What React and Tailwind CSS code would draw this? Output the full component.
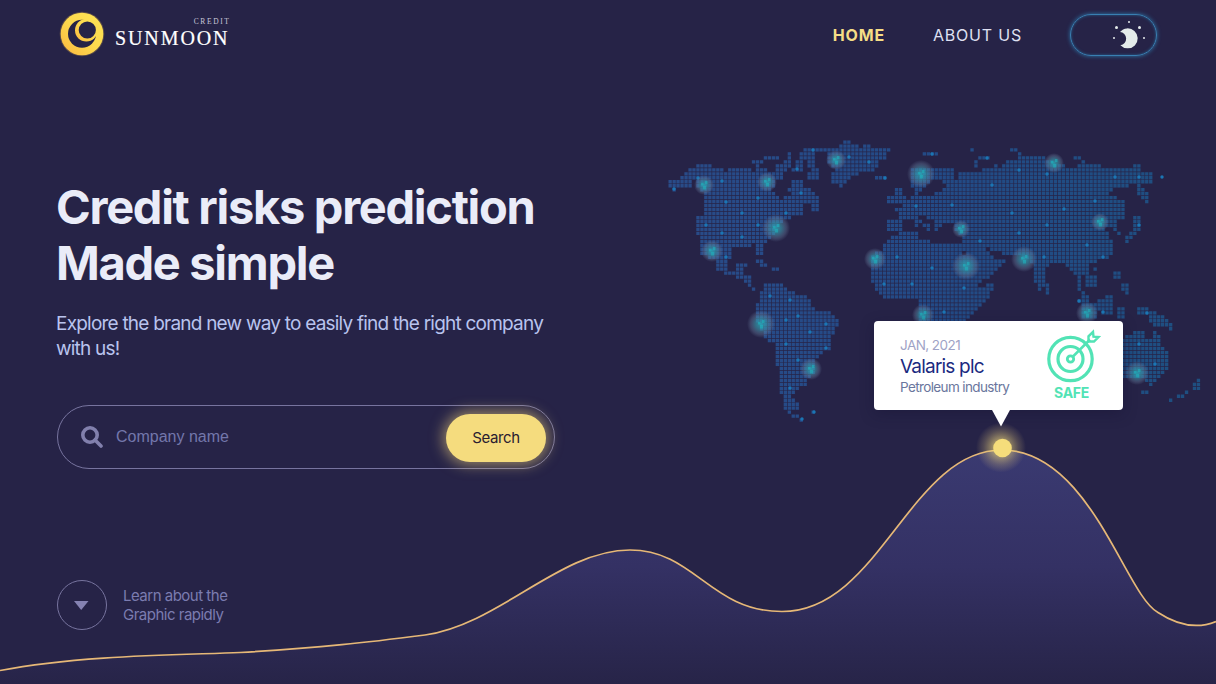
import React from "react";

// Outlines are kept at three units per pixel; each group has its own origin.
const LAND = [
  {
    origin: [660, 130],
    outlines: [
      "26,150 62,150 62,138 74,138 74,126 86,126 86,114 110,114 110,102 157,102 157,114 190,114 190,126 205,126 205,114 275,114 275,126 288,126 288,114 325,114 325,126 372,126 372,150 350,150 345,174 325,186 348,186 348,198 360,210 372,210 372,198 396,198 396,186 384,186 384,174 398,174 398,150 432,150 432,174 456,174 456,186 468,186 468,198 480,198 480,244 456,244 456,222 432,222 430,254 396,254 396,266 372,266 372,280 350,290 348,318 325,330 313,342 313,378 288,378 288,342 277,342 277,350 217,350 217,385 205,390 205,420 240,424 240,434 193,434 193,420 168,420 168,390 145,390 145,378 122,378 122,318 110,314 110,258 134,258 134,186 122,186 110,174 110,150 98,150 98,162 86,174 62,174 50,184 38,184 38,174 26,174",
      "277,90 313,90 313,102 277,102", "288,102 300,102 300,120 288,120", "313,78 360,78 360,90 313,90",
      "385,66 396,66 396,110 385,110", "372,90 384,90 384,130 372,130",
      "348,100 372,100 372,126 348,126",
      "408,90 432,90 432,128 396,128 396,112 408,108",
      "432,54 540,54 540,66 470,66 470,90 420,90 420,66 432,66",
      "444,90 468,90 468,114 480,126 480,150 444,150 444,126 456,114 444,112",
      "228,410 240,400 264,400 264,412 252,412 252,434 275,434 275,456 264,460 252,446 228,444",
      "288,388 310,388 310,398 288,398", "300,400 325,400 325,410 300,410", "337,412 360,412 360,424 337,424",
    ],
  },
  {
    origin: [820, 130],
    outlines: [
      "0,54 60,54 60,42 70,42 70,30 96,30 96,42 120,42 120,54 132,54 132,42 154,42 154,54 214,54 214,66 202,66 202,90 178,90 178,112 166,112 166,124 118,124 118,136 94,136 94,148 82,148 82,160 70,160 70,172 58,172 58,160 36,160 36,126 46,114 24,100 24,66 0,66",
      "166,138 202,138 202,150 166,150", "308,66 355,66 355,78 308,78", "446,54 468,54 468,66 446,66",
      "478,78 508,78 508,90 478,90", "462,90 474,90 474,114 462,114", "568,54 592,54 592,66 568,66", "592,66 604,66 604,78 592,78",
      "760,78 784,78 784,90 760,90", "782,90 796,90 796,102 782,102",
      "226,172 248,172 248,198 256,198 256,220 226,220", "202,198 224,198 224,222 202,222",
      "272,112 402,112 402,126 408,148 420,148 420,126 486,126 486,114 522,114 522,102 534,102 534,114 546,114 546,102 558,102 558,90 594,90 594,78 680,78 680,90 725,102 745,114 768,114 768,102 844,102 844,114 938,114 938,102 960,102 960,114 972,126 996,126 996,160 960,160 960,170 972,180 984,190 984,216 972,216 972,204 960,204 952,192 952,160 926,160 926,172 890,172 880,180 870,180 870,192 890,198 890,210 914,210 914,268 892,268 892,305 884,305 884,290 860,290 855,300 870,318 878,330 878,372 868,384 844,384 832,396 808,396 808,432 828,432 828,470 805,475 798,462 800,440 785,430 780,440 780,480 770,480 770,440 760,430 750,420 738,408 728,396 700,396 690,408 682,420 678,430 676,460 668,480 656,480 654,460 642,450 642,420 636,400 620,385 590,378 546,372 534,362 510,362 506,350 496,350 510,372 522,384 546,384 558,396 546,408 534,420 522,430 510,440 498,450 486,450 478,470 520,460 522,480 510,492 498,516 486,528 474,540 456,560 420,600 300,600 300,540 298,516 286,504 190,504 178,492 166,470 154,450 154,420 145,400 165,370 190,360 190,342 210,330 212,316 236,316 236,304 202,306 202,268 236,268 244,260 236,252 226,246 226,234 244,234 256,222 250,210 268,212 275,200 285,198 290,180 272,172 268,140",
      "938,256 960,256 960,300 950,320 930,326 924,338 912,338 912,318 930,314 938,300",
      "892,300 902,312 890,312", "880,424 900,424 900,444 880,444", "900,460 924,456 924,492 912,492 900,480",
      "820,408 830,408 830,420 820,420", "676,464 688,464 688,492 676,492", "772,506 785,506 785,518 772,518",
      "784,482 808,500 808,518 784,515", "780,525 830,525 830,570 780,570",
      "832,516 850,504 878,496 878,552 850,552 832,540", "888,535 912,535 912,570 892,570",
      "948,532 975,532 990,545 1010,545 1030,560 1055,584 1055,602 1035,592 1000,588 985,562 948,550",
    ],
    holes: [
      "248,270 275,264 300,262 310,258 320,268 345,272 360,290 372,280 398,280 402,300 426,320 426,336 360,340 300,330 290,306 248,306",
      "300,186 345,150 375,160 378,172 345,190 330,198 300,195", "424,362 440,362 440,378 424,378",
    ],
  },
  {
    // Italy, Sicily and the Aegean, set in the Mediterranean
    origin: [820, 130],
    outlines: [
      "285,262 298,262 298,274 310,274 310,286 296,286 285,274", "308,278 332,278 332,304 320,304 308,290",
      "284,286 296,286 296,298 284,298", "344,278 356,278 356,304 344,304",
    ],
  },
  {
    origin: [860, 300],
    outlines: [
      "780,115 805,105 830,93 852,93 852,110 870,126 876,118 876,95 888,92 900,105 900,130 924,160 924,210 905,225 888,245 870,258 858,250 850,235 820,240 780,230",
      "842,270 864,270 864,284 842,284", "996,250 1008,250 1008,238 1020,238 1020,276 996,276",
      "970,274 982,274 982,286 970,286", "946,288 970,288 970,298 946,298", "932,298 944,298 944,310 932,310",
    ],
  },
  {
    origin: [720, 270],
    outlines: [
      "133,40 192,40 192,52 216,64 228,76 264,76 264,88 276,100 276,112 288,124 335,124 335,136 346,136 346,148 358,148 358,170 346,172 346,190 334,200 334,234 322,240 310,250 288,264 288,290 280,320 262,330 262,345 240,350 228,362 228,374 216,380 228,396 236,400 236,416 216,424 216,432 192,420 192,372 180,366 180,298 168,294 168,216 145,214 133,200 120,180 110,150 108,100 120,90 120,66 133,64",
      "216,430 238,430 238,442 216,442", "240,442 252,442 252,454 240,454", "276,418 288,418 288,430 276,430",
      "60,16 96,16 96,46 84,46 72,40 60,28", "94,50 108,50 108,64 94,64",
    ],
  },
];

const HUBS = [
  [704, 185, 10], [767, 182, 10], [776, 228, 14], [712, 251, 11], [836, 160, 10], [921, 174, 14],
  [961, 229, 9], [875, 259, 11], [966, 266, 14], [1054, 163, 10], [1100, 222, 9], [1024, 259, 13],
  [1087, 313, 11], [923, 315, 11], [761, 324, 14], [811, 369, 11], [1137, 373, 12],
];

const SPARKS = [
  [674, 189], [698, 178], [722, 181], [726, 202], [758, 198], [742, 213], [706, 225], [722, 233], [742, 237],
  [758, 225], [726, 257], [786, 213], [801, 193], [797, 169], [813, 150], [849, 157], [869, 162], [885, 178],
  [932, 154], [987, 158], [992, 185], [916, 206], [952, 205], [1012, 213], [980, 241], [897, 257], [932, 268],
  [884, 284], [912, 284], [964, 288], [944, 312], [1019, 170], [1047, 174], [1115, 177], [1139, 177], [1162, 177],
  [1095, 201], [1064, 209], [1047, 225], [1139, 225], [1087, 245], [1103, 257], [1044, 257], [1019, 233],
  [1079, 301], [1103, 312], [1147, 313], [1139, 344], [1155, 364], [770, 296], [790, 300], [798, 316], [786, 320],
  [810, 332], [826, 324], [786, 344], [826, 348], [798, 360], [790, 388], [814, 412], [802, 419],
];

const PITCH = 3.972;
const toPoints = (s) => s.split(" ").map((p) => p.split(",").map(Number));

function inside(pts, x, y) {
  let hit = false;
  for (let i = 0, j = pts.length - 1; i < pts.length; j = i++) {
    const [xi, yi] = pts[i];
    const [xj, yj] = pts[j];
    if (yi > y !== yj > y && x < ((xj - xi) * (y - yi)) / (yj - yi) + xi) hit = !hit;
  }
  return hit;
}

function buildCells() {
  const groups = LAND.map((g) => ({
    origin: g.origin,
    outlines: g.outlines.map(toPoints),
    holes: (g.holes || []).map(toPoints),
  }));
  let d = "";
  for (let r = 0; r < 72; r++) {
    for (let c = 0; c < 136; c++) {
      const x = 668.5 + c * PITCH;
      const y = 140.4 + r * PITCH;
      const land = groups.some(({ origin, outlines, holes }) => {
        const px = (x + 1.9 - origin[0]) * 3;
        const py = (y + 1.9 - origin[1]) * 3;
        return outlines.some((o) => inside(o, px, py)) && !holes.some((h) => inside(h, px, py));
      });
      if (land) d += `M${x.toFixed(1)} ${y.toFixed(1)}h3.3v3.3h-3.3z`;
    }
  }
  return d;
}

const CELLS = buildCells();
const CURVE =
  "M0 670.500C80 655 180 655 240 652.500C320 648 370 642 425 635C500 624 560 550 630 550C695 550 710 611.500 782 611.500C880 611.500 910 450 1002 450C1090 450 1125 595 1158 612.500C1180 627 1200 628 1216 621.500";

function Backdrop() {
  return (
    <svg className="absolute inset-0 h-full w-full" viewBox="0 0 1216 684" aria-hidden="true">
      <defs>
        <linearGradient id="hill" gradientUnits="userSpaceOnUse" x1="0" y1="449" x2="0" y2="684">
          <stop offset="0" stopColor="#3a3a71" />
          <stop offset="0.5" stopColor="#343164" />
          <stop offset="1" stopColor="#272448" />
        </linearGradient>
        <linearGradient id="sea" gradientUnits="userSpaceOnUse" x1="668" y1="0" x2="1200" y2="0">
          <stop offset="0" stopColor="#294b88" />
          <stop offset="0.5" stopColor="#234a86" />
          <stop offset="1" stopColor="#1e4f80" />
        </linearGradient>
        <radialGradient id="hub">
          <stop offset="0" stopColor="#2aa9b8" stopOpacity="0.85" />
          <stop offset="0.4" stopColor="#3a98ac" stopOpacity="0.62" />
          <stop offset="0.75" stopColor="#6d87a8" stopOpacity="0.32" />
          <stop offset="1" stopColor="#6d87a8" stopOpacity="0" />
        </radialGradient>
        <radialGradient id="sun">
          <stop offset="0.3" stopColor="#f6dd7c" stopOpacity="0.6" />
          <stop offset="0.7" stopColor="#d9c078" stopOpacity="0.24" />
          <stop offset="1" stopColor="#d9c078" stopOpacity="0" />
        </radialGradient>
      </defs>
      <path d={CELLS} fill="url(#sea)" />
      {SPARKS.map(([x, y]) => (
        <circle key={`${x}-${y}`} cx={x} cy={y} r="1.7" fill="#1b76b4" />
      ))}
      {HUBS.map(([x, y, r]) => (
        <g key={`${x}-${y}`}>
          <circle cx={x} cy={y} r={r} fill="url(#hub)" />
          <path
            d={`M${x - 3} ${y - 2}h2.500v2.500h-2.500zM${x + 1} ${y - 4}h2.500v3h-2.500zM${x - 1} ${y + 1}h3v3.500h-3z`}
            fill="#1fb0bd"
            opacity="0.6"
          />
        </g>
      ))}
      <path d={`${CURVE}V684H0Z`} fill="url(#hill)" />
      <path d={CURVE} fill="none" stroke="#e6b877" strokeWidth="1.7" />
      <circle cx="1001" cy="447.500" r="25" fill="url(#sun)" />
      <circle cx="1002.500" cy="448" r="9.300" fill="#f5dd7b" />
    </svg>
  );
}

function Logo() {
  return (
    <a className="-mt-[2px] flex items-center gap-[10px]">
      <svg className="h-[46px] w-[46px]" viewBox="0 0 46 46" aria-hidden="true">
        <defs>
          <linearGradient id="gold" x1="0" y1="1" x2="1" y2="0">
            <stop offset="0" stopColor="#fbb73f" />
            <stop offset="0.5" stopColor="#fdd94e" />
            <stop offset="1" stopColor="#fde455" />
          </linearGradient>
        </defs>
        <circle cx="23" cy="23" r="22.300" fill="#fdc94a" opacity="0.25" />
        <circle cx="23" cy="23" r="21.300" fill="url(#gold)" />
        <circle cx="23" cy="22.800" r="14" fill="#262347" />
        <circle cx="27.300" cy="19.300" r="11.300" fill="url(#gold)" />
        <circle cx="28.300" cy="19" r="8.600" fill="#262347" />
      </svg>
      <span className="flex flex-col items-end font-['Liberation_Serif',serif] text-white">
        <span className="mr-[-1px] text-[7.500px] leading-[8px] tracking-[1.6px] text-[#c9c8da]">CREDIT</span>
        <span className="text-[20px] leading-[25px] tracking-[1.9px] [-webkit-text-stroke:0.2px_white]">SUNMOON</span>
      </span>
    </a>
  );
}

function ThemeSwitch() {
  return (
    <button className="h-[42px] w-[87px] rounded-full border border-[#397fb2] shadow-[0_0_4px_#2d79ac,inset_0_0_3px_#27618f]">
      <svg className="h-[40px] w-[85px]" viewBox="0 0 85 40" fill="#e4ebea" aria-hidden="true">
        <path d="M49 17A10 10 0 1 1 49.400 30.200A6.640 6.640 0 0 0 49 17Z" />
        <circle cx="58" cy="7" r="1" />
        <circle cx="45.500" cy="12.500" r="1.500" />
        <circle cx="68.500" cy="12.500" r="1.500" />
        <circle cx="43" cy="23" r="1" />
        <circle cx="73" cy="23" r="1" />
      </svg>
    </button>
  );
}

function TargetIcon() {
  return (
    <svg className="h-[54px] w-[54px]" viewBox="0 0 54 54" fill="none" stroke="#52e3b5" aria-hidden="true">
      <circle cx="23.500" cy="30" r="21.700" strokeWidth="3.200" />
      <circle cx="23.500" cy="30" r="12.500" strokeWidth="3.200" />
      <circle cx="23.500" cy="30" r="3.200" strokeWidth="2.800" />
      <path d="M25.500 28L43 10.500" strokeWidth="2.500" />
      <path d="M41.500 12.500V7.300L46 2.800L46.500 7.700L51.500 8L47 12.500Z" strokeWidth="2.400" />
    </svg>
  );
}

function Callout() {
  return (
    <aside className="absolute left-[874px] top-[321px] h-[89px] w-[249px] rounded-[4px] bg-white shadow-[0_4px_14px_rgba(20,16,50,0.35)]">
      <div className="flex h-full justify-between pl-[26px] pr-[22px]">
        <div className="flex flex-col pt-[16px]">
          <span className="text-[13.500px] leading-[17px] tracking-[-0.55px] text-[#9fa3c6]">JAN, 2021</span>
          <span className="text-[19px] leading-[25px] tracking-[-0.8px] text-[#1b2a80]">Valaris plc</span>
          <span className="text-[13.500px] leading-[17px] tracking-[-0.62px] text-[#6a769d]">Petroleum industry</span>
        </div>
        <div className="flex flex-col items-start pt-[8px]">
          <TargetIcon />
          <span className="pl-[7px] text-[14px] font-bold leading-[20px] tracking-[-0.3px] text-[#52e3b5]">SAFE</span>
        </div>
      </div>
      <svg className="absolute left-[117px] top-[88px] h-[18px] w-[20px]" viewBox="0 0 20 18" aria-hidden="true">
        <path d="M0.500 0H19.500L10 17.500Z" fill="#fff" />
      </svg>
    </aside>
  );
}

export default function App() {
  return (
    <div className="relative h-[684px] w-full overflow-hidden bg-[#262347] font-['Inter','Liberation_Sans',sans-serif]">
      <Backdrop />
      <div className="relative flex h-full flex-col">
        <header className="flex h-[70px] items-center justify-between pl-[59px] pr-[59px]">
          <Logo />
          <nav className="flex items-center gap-[48px] text-[16px] tracking-[0.8px]">
            <a className="-mt-px font-bold text-[#f5dd86]">HOME</a>
            <a className="-mt-px text-[#dfe0f2]">ABOUT US</a>
            <ThemeSwitch />
          </nav>
        </header>
        <main className="flex w-[600px] flex-col items-start pl-[57px] pt-[109px]">
          <h1 className="-ml-px whitespace-nowrap text-[47px] font-bold leading-[56px] tracking-[-1.3px] text-[#eaecf8]">
            Credit risks prediction
            <br />
            Made simple
          </h1>
          <p className="-ml-px mt-[20px] whitespace-nowrap text-[19px] leading-[25px] tracking-[-0.78px] text-[#b9c3ee]">
            Explore the brand new way to easily find the right company
            <br />
            with us!
          </p>
          <form className="mt-[44px] flex h-[64px] w-[498px] items-center rounded-full border border-[#77749f] pl-[23px] pr-[8px]">
            <svg className="h-[22px] w-[22px]" viewBox="0 0 22 22" fill="none" stroke="#8280ad" strokeWidth="3.600" aria-hidden="true">
              <circle cx="9" cy="9" r="7.200" />
              <path d="M14 14L20 20" strokeLinecap="round" />
            </svg>
            <span className="ml-[13px] flex-1 font-['Liberation_Sans',sans-serif] text-[16px] text-[#7377ab]">Company name</span>
            <button type="button" className="mt-[2px] h-[48px] w-[100px] rounded-full bg-[#f5dc7e] text-[15px] tracking-[-0.35px] text-[#2a2030] shadow-[0_0_14px_3px_rgba(245,215,125,0.55)]">
              Search
            </button>
          </form>
          <div className="mt-[111px] flex items-center gap-[16px]">
            <span className="flex h-[50px] w-[50px] items-center justify-center rounded-full border border-[#77749f]">
              <svg className="-ml-[2px] h-[10px] w-[15px]" viewBox="0 0 15 10" fill="#8582b2" aria-hidden="true">
                <path d="M0 1H14.500L7.200 10Z" />
              </svg>
            </span>
            <p className="text-[15px] leading-[19px] tracking-[-0.5px] text-[#7b7cb0]">
              Learn about the
              <br />
              Graphic rapidly
            </p>
          </div>
        </main>
      </div>
      <Callout />
    </div>
  );
}
